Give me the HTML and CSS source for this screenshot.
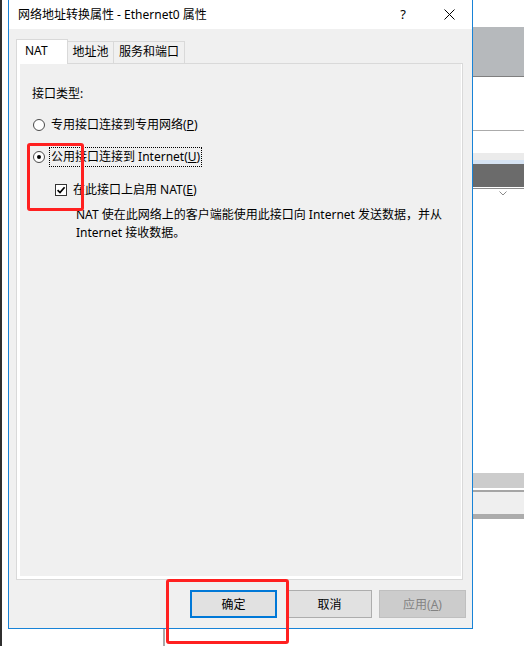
FILE: index.html
```html
<!DOCTYPE html>
<html lang="zh-CN">
<head>
<meta charset="utf-8">
<title>网络地址转换属性 - Ethernet0 属性</title>
<link rel="stylesheet" href="styles.css">
</head>
<body>
<div class="screen">
  <div class="bg-left"></div>
  <div class="dialog-col">
    <div class="dialog">
      <div class="titlebar">
        <div class="title">网络地址转换属性 - Ethernet0 属性</div>
        <div class="cap-btn help">?</div>
        <div class="cap-btn close">
          <svg width="11" height="11" viewBox="0 0 11 11"><path d="M0.5 0.5 L10.5 10.5 M10.5 0.5 L0.5 10.5" stroke="#000" stroke-width="1" fill="none"/></svg>
        </div>
      </div>
      <div class="dialog-body">
        <div class="tabs">
          <div class="tab active tab-nat">NAT</div>
          <div class="tab tab-pool">地址池</div>
          <div class="tab tab-svc">服务和端口</div>
        </div>
        <div class="panel">
          <div class="group-label">接口类型:</div>
          <div class="radio-row">
            <span class="radio"></span>
            <span class="opt-label">专用接口连接到专用网络(<u>P</u>)</span>
          </div>
          <div class="radio-row">
            <span class="radio checked"></span>
            <span class="opt-label focus">公用接口连接到 Internet(<u>U</u>)</span>
          </div>
          <div class="check-row">
            <span class="checkbox">
              <svg width="10" height="10" viewBox="0 0 10 10"><path d="M1.6 5.2 L4 7.6 L8.6 2.2" stroke="#000" stroke-width="1.7" fill="none"/></svg>
            </span>
            <span class="check-label">在此接口上启用 NAT(<u>E</u>)</span>
          </div>
          <div class="desc">NAT 使在此网络上的客户端能使用此接口向 Internet 发送数据，并从<br>Internet 接收数据。</div>
        </div>
        <div class="buttons">
          <div class="btn default btn-ok">确定</div>
          <div class="btn btn-cancel">取消</div>
          <div class="btn disabled btn-apply">应用(<u>A</u>)</div>
        </div>
      </div>
    </div>
    <div class="below"><div class="vline"></div></div>
  </div>
  <div class="bg-right">
    <div class="s s-top"></div>
    <div class="s s-gray"></div>
    <div class="s s-line-dark"></div>
    <div class="s s-white1"></div>
    <div class="s s-line"></div>
    <div class="s s-white2"></div>
    <div class="s s-light"></div>
    <div class="s s-blue"></div>
    <div class="s s-dark"></div>
    <div class="s s-white3"></div>
    <div class="s s-line2"></div>
    <div class="s s-white4">
      <svg class="chev" width="8" height="5" viewBox="0 0 8 5"><path d="M0.5 0.5 L4 4 L7.5 0.5" stroke="#8a8a8a" stroke-width="1" fill="none"/></svg>
    </div>
    <div class="s s-mid"></div>
    <div class="s s-white5"></div>
    <div class="s s-line3"></div>
    <div class="s s-pale"></div>
    <div class="s s-bot"></div>
    <div class="s s-rest"></div>
  </div>
</div>
<div class="annot annot-1"></div>
<div class="annot annot-2"></div>
</body>
</html>
```
FILE: styles.css
```css
* { box-sizing: border-box; }
html, body { margin: 0; padding: 0; }
body {
  width: 524px;
  height: 646px;
  overflow: hidden;
  background: #fff;
  font-family: "Noto Sans", "Noto Sans CJK SC", sans-serif;
  font-size: 12px;
  color: #000;
  position: relative;
}
u { text-decoration: underline; text-underline-offset: 1px; }

.screen { display: flex; height: 646px; }

.bg-left {
  width: 8px;
  flex: none;
  border-left: 2px solid #2f2f2f;
  background: #fff;
}

.dialog-col { width: 465px; flex: none; display: flex; flex-direction: column; }

.dialog {
  height: 629px;
  flex: none;
  border: 1px solid #1883d7;
  border-top: 0;
  background: #f0f0f0;
  display: flex;
  flex-direction: column;
}

.titlebar { height: 29px; flex: none; background: #fff; display: flex; align-items: center; }
.title { flex: 1; padding-left: 9px; line-height: 29px; white-space: nowrap; }
.cap-btn { width: 46px; height: 29px; display: flex; align-items: center; justify-content: center; }
.help { font-size: 13px; padding-bottom: 1px; }

.dialog-body { flex: 1; padding: 10px 9px 10px 7px; display: flex; flex-direction: column; }

.tabs { display: flex; align-items: flex-end; height: 24px; flex: none; }
.tab {
  height: 22px;
  border: 1px solid #d9d9d9;
  border-left: 0;
  border-bottom: 0;
  background: #f0f0f0;
  line-height: 20px;
  text-align: center;
  white-space: nowrap;
}
.tab.active {
  height: 25px;
  border-left: 1px solid #d9d9d9;
  background: #fff;
  margin-bottom: -1px;
  position: relative;
  z-index: 1;
  line-height: 21px;
  text-align: left;
  padding-left: 8px;
}
.tab-nat { width: 52px; }
.tab-pool { width: 46px; }
.tab-svc { width: 71px; }

.panel {
  width: 447px;
  height: 517px;
  flex: none;
  border: 1px solid #d9d9d9;
  box-shadow: inset 3px 0 0 #fff, inset 0 -3px 0 #fff, inset -1px 0 0 #fff;
  padding: 20px 15px 0;
}

.group-label { line-height: 20px; }

.radio-row { display: flex; align-items: center; height: 20px; margin-top: 11px; }
.radio-row + .radio-row { margin-top: 12px; }
.radio {
  width: 12px;
  height: 12px;
  flex: none;
  border: 1px solid #4a4a4a;
  border-radius: 50%;
  background: #fff;
  margin-left: 1px;
  margin-right: 4px;
  display: flex;
  align-items: center;
  justify-content: center;
}
.radio.checked::after {
  content: "";
  width: 4px;
  height: 4px;
  border-radius: 50%;
  background: #000;
}
.opt-label {
  border: 1px dotted transparent;
  padding: 0 1px;
  line-height: 18px;
  white-space: nowrap;
}
.opt-label.focus { border-color: #000; }

.check-row { display: flex; align-items: center; height: 20px; margin-top: 13px; padding-left: 23px; }
.checkbox {
  width: 12px;
  height: 12px;
  flex: none;
  border: 1px solid #333;
  background: #fff;
  margin-right: 6px;
  display: flex;
  align-items: center;
  justify-content: center;
}
.check-label { line-height: 20px; white-space: nowrap; }

.desc { margin-top: 6px; padding-left: 44px; line-height: 18px; white-space: nowrap; }

.buttons { margin-top: 10px; margin-right: -3px; height: 28px; flex: none; display: flex; justify-content: flex-end; }
.btn {
  height: 28px;
  border: 1px solid #adadad;
  background: #e1e1e1;
  display: flex;
  align-items: center;
  justify-content: center;
  white-space: nowrap;
}
.btn.default { border: 2px solid #0078d7; }
.btn.disabled { background: #cccccc; border-color: #bfbfbf; color: #838383; }
.btn-ok { width: 87px; margin-right: 10px; }
.btn-cancel { width: 85px; margin-right: 7px; }
.btn-apply { width: 87px; }

.below { flex: 1; padding-left: 155px; }
.vline { width: 2px; height: 100%; background: #a9a9a9; }

.bg-right { flex: 1; display: flex; flex-direction: column; }
.s { flex: none; }
.s-top { height: 27px; background: #fff; }
.s-gray { height: 49px; background: #b6b9bc; }
.s-line-dark { height: 1px; background: #7f7f7f; }
.s-white1 { height: 53px; background: #fff; }
.s-line { height: 1px; background: #ababab; }
.s-white2 { height: 22px; background: #fff; }
.s-light { height: 7px; background: #ebebeb; }
.s-blue { height: 4px; background: #d6e3f3; }
.s-dark { height: 23px; background: #6b6b6b; }
.s-white3 { height: 1px; background: #fff; }
.s-line2 { height: 1px; background: #8c8c8c; }
.s-white4 { height: 284px; background: #fff; padding: 2px 0 0 26px; }
.chev { display: block; }
.s-mid { height: 15px; background: #cccccc; }
.s-white5 { height: 2px; background: #fff; }
.s-line3 { height: 2px; background: #a5a5a5; }
.s-pale { height: 22px; background: #efefef; }
.s-bot { height: 5px; background: #acacac; }
.s-rest { flex: 1; background: #fff; }

.annot {
  position: absolute;
  border: 3px solid #ff2020;
  border-radius: 3px;
}
.annot-1 { left: 27px; top: 143px; width: 57px; height: 68px; }
.annot-2 { left: 166px; top: 579px; width: 123px; height: 65px; }
```
